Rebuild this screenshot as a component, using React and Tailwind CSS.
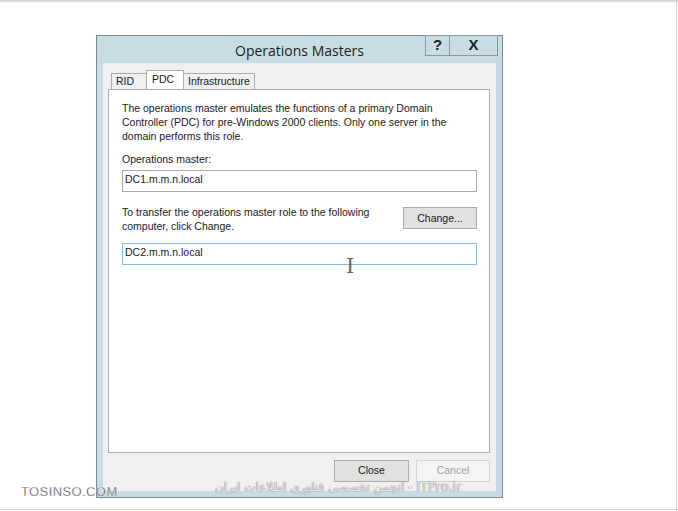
import React from 'react';

const ui = { fontFamily: '"Liberation Sans", Arial, sans-serif' };

const Field = ({ value, focused }) => (
  <div
    className={`h-[22px] w-[355px] bg-white border pl-[2px] pt-[1px] text-[10.5px] leading-[14px] text-[#1a1a1a] ${
      focused ? 'border-[#7fc4dc]' : 'border-[#a9a9a9]'
    }`}
  >
    {value}
  </div>
);

const Tab = ({ label, active, w }) =>
  active ? (
    <div className={`${w} h-[19px] pl-[5px] -mx-[1px] relative z-10 bg-white border border-b-0 border-[#adadad] text-[10.5px] leading-[16px] text-[#1a1a1a]`}>
      {label}
    </div>
  ) : (
    <div className={`${w} h-[16px] mt-[3px] pl-[4px] bg-[#f0f0f0] border border-b-0 border-[#adadad] text-[10.5px] leading-[15px] text-[#1a1a1a]`}>
      {label}
    </div>
  );

export default function App() {
  return (
    <div className="relative w-[678px] h-[511px] overflow-hidden bg-white" style={ui}>
      <div className="h-[3px] bg-gradient-to-b from-[#c8c8c8] to-white" />
      <div className="absolute right-[1px] top-0 h-full w-[1px] bg-[#cfcfcf]" />
      <div className="absolute bottom-[1px] left-0 w-full h-[1px] bg-[#cfcfcf]" />

      {/* dialog */}
      <div className="ml-[96px] mt-[32px] w-[407px] h-[463px] border border-[#7b8a90] bg-[#c7dde3] flex flex-col">
        <div className="relative h-[27px] shrink-0">
          <div className="text-center text-[14px] leading-[16px] pt-[7px] text-[#1e1e1e]" style={{ fontFamily: '"Open Sans", "Noto Sans", sans-serif' }}>
            Operations Masters
          </div>
          <div className="absolute top-[-1px] right-[4px] flex h-[21px]">
            <div className="w-[25px] border border-[#8a9aa0] flex items-center justify-center text-[15px] font-bold text-[#222]">?</div>
            <div className="w-[48px] border border-l-0 border-[#8a9aa0] flex items-center justify-center text-[15px] font-bold text-[#222]">X</div>
          </div>
        </div>

        <div className="mx-[6px] h-[428px] bg-[#f0f0f0] flex flex-col">
          <div className="flex items-end pl-[8px] pt-[8px] h-[26px]">
            <Tab label="RID" w="w-[36px]" />
            <Tab label="PDC" w="w-[38px]" active />
            <Tab label="Infrastructure" w="w-[72px]" />
          </div>

          <div className="ml-[5px] mr-[6px] h-[364px] bg-white border border-[#adadad] pl-[13px] pt-[11px] text-[10.5px] leading-[14px] text-[#1a1a1a]">
            <p className="w-[340px]">
              The operations master emulates the functions of a primary Domain Controller (PDC) for pre-Windows 2000 clients. Only one server in the domain performs this role.
            </p>
            <div className="mt-[9px] mb-[4px]">Operations master:</div>
            <Field value="DC1.m.m.n.local" />
            <div className="flex items-start justify-between w-[355px] mt-[13px]">
              <div className="w-[260px]">To transfer the operations master role to the following computer, click Change.</div>
              <div className="mt-[2px] h-[22px] w-[74px] bg-[#e1e1e1] border border-[#adadad] flex items-center justify-center">
                Change...
              </div>
            </div>
            <div className="mt-[10px]">
              <Field value="DC2.m.m.n.local" focused />
            </div>
            <div className="ml-[224px] mt-[-9px] text-[#666] text-[21px] leading-[20px]" style={{ fontFamily: '"DejaVu Serif", serif' }}>
              I
            </div>
          </div>

          <div className="flex justify-end gap-[7px] mr-[6px] mt-[7px]">
            <div className="h-[22px] w-[75px] bg-[#e1e1e1] border border-[#adadad] flex items-center justify-center text-[10.5px] text-[#1a1a1a]">Close</div>
            <div className="h-[22px] w-[74px] bg-[#f4f4f4] border border-[#d5d5d5] flex items-center justify-center text-[10.5px] text-[#a3a3a3]">Cancel</div>
          </div>
        </div>
      </div>

      {/* watermarks */}
      <div className="absolute left-[21px] top-[482px] text-[13px] text-[#444] tracking-[0.4px]" style={{ fontFamily: '"Liberation Sans", sans-serif', WebkitTextStroke: '0.3px #fff' }}>
        TOSINSO.COM
      </div>
      <div
        dir="ltr"
        className="absolute left-[215px] top-[477px] text-[12px] text-white/80"
        style={{ fontFamily: '"DejaVu Sans", "Noto Sans", sans-serif', textShadow: '0 0 1px #777, 0 0 1px #777' }}
      >
        <span dir="rtl">انجمن تخصصی فناوری اطلاعات ایران</span> - <span className="text-[13px]">ITPro.ir</span>
      </div>
    </div>
  );
}
